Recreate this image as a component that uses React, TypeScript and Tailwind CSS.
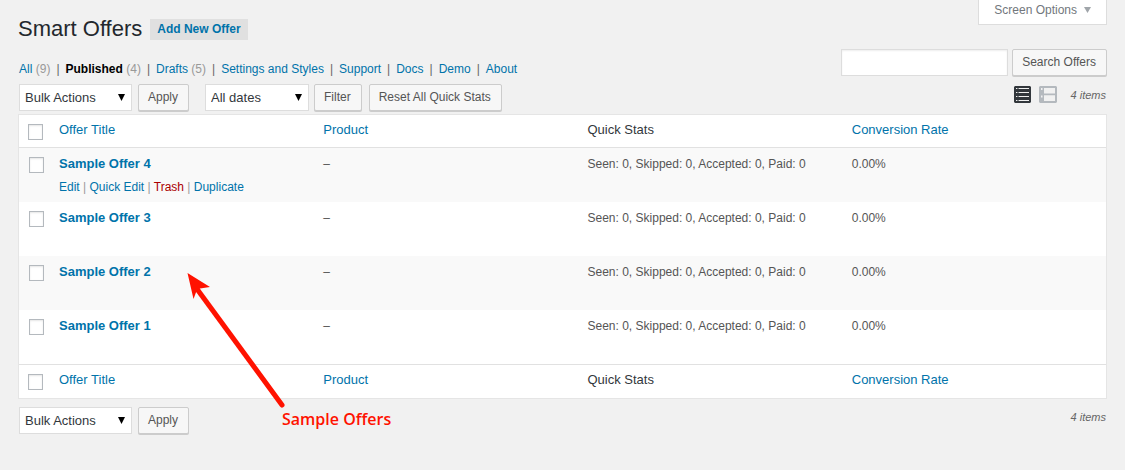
import React from "react";

const link = "text-[#0073aa] hover:text-[#00a0d2]";

const views: { label: string; count?: number; current?: boolean }[] = [
  { label: "All", count: 9 },
  { label: "Published", count: 4, current: true },
  { label: "Drafts", count: 5 },
  { label: "Settings and Styles" },
  { label: "Support" },
  { label: "Docs" },
  { label: "Demo" },
  { label: "About" },
];

const offers = [
  { title: "Sample Offer 4", actions: true },
  { title: "Sample Offer 3", actions: false },
  { title: "Sample Offer 2", actions: false },
  { title: "Sample Offer 1", actions: false },
];

function Button({ children, type = "button" }: { children: React.ReactNode; type?: "button" | "submit" }) {
  return (
    <button
      type={type}
      className="h-[27px] rounded-[2px] border border-[#cccccc] bg-[#f7f7f7] pr-2.5 pb-0.5 pl-[9px] text-xs whitespace-nowrap text-[#555555] shadow-[0_1px_0_#cccccc]"
    >
      {children}
    </button>
  );
}

function Select({ label, option, className }: { label: string; option: string; className: string }) {
  return (
    <div className={`relative ${className}`}>
      <select
        aria-label={label}
        className="block h-[27px] w-full appearance-none rounded-none border border-[#dddddd] bg-white pr-5 pl-[5px] text-[13px] text-[#32373c]"
      >
        <option>{option}</option>
      </select>
      <svg className="pointer-events-none absolute top-2.5 right-[7px]" width="7" height="7" viewBox="0 0 7 7" aria-hidden="true">
        <path d="M0 0h7L3.5 7z" fill="#000" />
      </svg>
    </div>
  );
}

function Checkbox({ label }: { label: string }) {
  return (
    <input
      type="checkbox"
      aria-label={label}
      className="block h-4 w-[15px] appearance-none border border-[#b4b9be] bg-white shadow-[inset_0_1px_2px_rgba(0,0,0,0.1)] checked:bg-[#1e8cbe]"
    />
  );
}

function HeadingCells({ label }: { label: string }) {
  return (
    <>
      <th className="w-[30px] pt-[9px] pl-[9px] align-top">
        <Checkbox label={label} />
      </th>
      <th className="px-2.5 py-1.5 align-top font-normal">
        <a href="#title" className={link}>Offer Title</a>
      </th>
      <th className="px-2.5 py-1.5 align-top font-normal">
        <a href="#product" className={link}>Product</a>
      </th>
      <th className="px-2.5 py-1.5 align-top font-normal text-[#32373c]">Quick Stats</th>
      <th className="px-2.5 py-1.5 align-top font-normal">
        <a href="#rate" className={link}>Conversion Rate</a>
      </th>
    </>
  );
}

function ListIcon() {
  return (
    <svg width="17" height="17" viewBox="0 0 17 17" aria-hidden="true">
      <path d="M1 0h15l1 1v15l-1 1H1l-1-1V1z" fill="#32373c" />
      <path
        d="M2 2.5h1.3M5 2.5H15M2 6.5h1.3M5 6.5H15M2 10.5h1.3M5 10.5H15M2 14.5h1.3M5 14.5H15"
        stroke="#f1f1f1"
        strokeWidth="1.1"
      />
      <path d="M3.3 2.5H5M3.3 6.5H5M3.3 10.5H5M3.3 14.5H5" stroke="#85898c" strokeWidth="1.1" />
    </svg>
  );
}

function ExcerptIcon() {
  return (
    <svg width="18" height="17" viewBox="0 0 18 17" aria-hidden="true">
      <path d="M1 0h16l1 1v15l-1 1H1l-1-1V1z" fill="#b4b9be" />
      <path d="M5 2h11v5.5H5zM5 9.3h11V15H5z" fill="#f1f1f1" />
      <path d="M2 2h1.5v2H2zM2 9.5h1.5v2H2z" fill="#f1f1f1" />
    </svg>
  );
}

export default function App() {
  return (
    <div className="min-h-screen bg-[#f1f1f1] px-[18px] pb-9 font-['Liberation_Sans',Arial,sans-serif] text-[13px] text-[#444444]">
      <header className="flex items-start justify-between">
        <div className="flex items-center gap-2 pt-3 pb-1">
          <h1 className="text-[22px] leading-[33px] text-[#23282d]">Smart Offers</h1>
          <a href="#new" className="mt-0.5 bg-[#e0e0e0] px-[7px] text-xs leading-[21px] font-bold text-[#0073aa]">
            Add New Offer
          </a>
        </div>
        <button
          type="button"
          className="flex h-[25px] items-center gap-[7px] border border-t-0 border-[#dddddd] bg-white pr-[15px] pb-1 pl-[15px] text-xs text-[#72777c]"
        >
          Screen Options
          <svg width="7" height="6" viewBox="0 0 7 6" aria-hidden="true">
            <path d="M0 0h7L3.5 6z" fill="#a0a5aa" />
          </svg>
        </button>
      </header>

      <div className="flex items-start justify-between">
        <ul className="flex pt-3 pl-px text-xs leading-4 whitespace-nowrap">
          {views.map((view, i) => (
            <li key={view.label}>
              <a href="#view" className={view.current ? "font-bold text-black" : link}>
                {view.label}
              </a>
              {view.count !== undefined && <span className="text-[#999999]"> ({view.count})</span>}
              {i < views.length - 1 && <span className="px-1.5 text-[#666666]">|</span>}
            </li>
          ))}
        </ul>
        <form className="flex gap-1" onSubmit={(e) => e.preventDefault()}>
          <input
            type="search"
            aria-label="Search Offers"
            className="h-[27px] w-[167px] border border-[#dddddd] bg-white px-1.5 shadow-[inset_0_1px_2px_rgba(0,0,0,0.07)]"
          />
          <Button type="submit">Search Offers</Button>
        </form>
      </div>

      <div className="flex items-start justify-between pt-[7px] pb-[3px] pl-px">
        <div className="flex">
          <Select label="Bulk action" option="Bulk Actions" className="mr-1.5 w-[113px]" />
          <Button>Apply</Button>
          <Select label="Filter by date" option="All dates" className="mr-[5px] ml-4 w-[104px]" />
          <div className="flex gap-[7px]">
            <Button>Filter</Button>
            <Button>Reset All Quick Stats</Button>
          </div>
        </div>
        <div className="flex items-start pt-0.5 pr-px">
          <button type="button" aria-label="List view" className="mr-2">
            <ListIcon />
          </button>
          <button type="button" aria-label="Excerpt view" className="mr-3.5">
            <ExcerptIcon />
          </button>
          <span className="text-[11px] leading-[18px] text-[#666666] italic">4 items</span>
        </div>
      </div>

      <main className="relative">
        <table className="w-full table-fixed border-separate border-spacing-0 border border-[#e5e5e5] bg-white text-left leading-[18px]">
          <thead>
            <tr className="h-[33px] [&>th]:border-b [&>th]:border-[#e1e1e1]">
              <HeadingCells label="Select all offers" />
            </tr>
          </thead>
          <tbody>
            {offers.map((offer) => (
              <tr key={offer.title} className="h-[54px] align-top odd:bg-[#f9f9f9]">
                <td className="pt-[9px] pl-2.5">
                  <Checkbox label={`Select ${offer.title}`} />
                </td>
                <td className="px-2.5 pt-[7px]">
                  <a href="#offer" className={`font-bold ${link}`}>{offer.title}</a>
                  {offer.actions && (
                    <div className="pt-[5px] text-xs leading-[18px] text-[#999999]">
                      <a href="#edit" className={link}>Edit</a> |{" "}
                      <a href="#quick-edit" className={link}>Quick Edit</a> |{" "}
                      <a href="#trash" className="text-[#aa0000]">Trash</a> |{" "}
                      <a href="#duplicate" className={link}>Duplicate</a>
                    </div>
                  )}
                </td>
                <td className="px-2.5 pt-[7px] text-xs leading-[18px] text-[#555555]">–</td>
                <td className="px-2.5 pt-[7px] text-xs leading-[18px] text-[#555555]">
                  Seen: 0, Skipped: 0, Accepted: 0, Paid: 0
                </td>
                <td className="px-2.5 pt-[7px] text-xs leading-[18px] text-[#555555]">0.00%</td>
              </tr>
            ))}
          </tbody>
          <tfoot>
            <tr className="h-[34px] [&>th]:border-t [&>th]:border-[#e1e1e1]">
              <HeadingCells label="Select all offers, bottom" />
            </tr>
          </tfoot>
        </table>

        <svg className="pointer-events-none absolute top-[159px] left-[169px]" width="100" height="137" viewBox="0 0 100 137" aria-hidden="true">
          <path d="M10 16L95 132" stroke="#ff1200" strokeWidth="5" strokeLinecap="round" />
          <path d="M0.5 0L23 14L13 15.5L9.5 18L6.5 26Z" fill="#ff1200" />
        </svg>
        <p className="pointer-events-none absolute top-[293px] left-[264px] font-['Open_Sans','Noto_Sans',sans-serif] text-base leading-6 font-semibold whitespace-nowrap text-[#ff1200]">
          Sample Offers
        </p>
      </main>

      <div className="flex items-start justify-between pt-2 pr-px pl-px">
        <div className="flex">
          <Select label="Bulk action, bottom" option="Bulk Actions" className="mr-1.5 w-[113px]" />
          <Button>Apply</Button>
        </div>
        <span className="text-[11px] leading-5 text-[#666666] italic">4 items</span>
      </div>
    </div>
  );
}
